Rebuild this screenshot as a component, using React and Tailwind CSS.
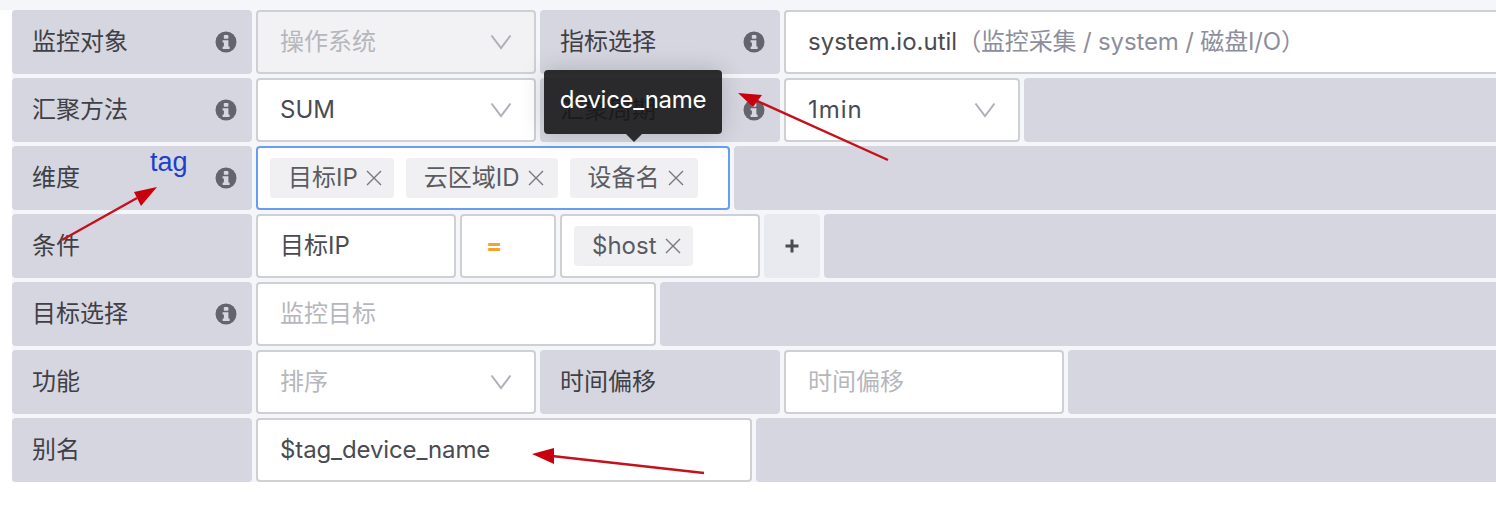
import React from 'react';

const InfoIcon = () => (
  <svg width="22" height="22" viewBox="0 0 22 22" className="shrink-0">
    <circle cx="11" cy="11" r="10.5" fill="#63656e" />
    <rect x="8.8" y="4" width="4.6" height="3.8" rx="0.8" fill="#d5d6e0" />
    <path d="M7.6 9.2 H13.4 V15.4 H14.6 V18 H7.6 V15.4 H8.9 V11.6 H7.6 Z" fill="#d5d6e0" />
  </svg>
);

const Label = ({ text, info, width = 'w-[240px]' }) => (
  <div className={`${width} h-16 shrink-0 flex items-center justify-between bg-[#d5d6e0] rounded pl-5 pr-[15px] text-[#3f4046]`}>
    <span>{text}</span>
    {info && <InfoIcon />}
  </div>
);

const Chevron = () => (
  <svg width="22" height="16" viewBox="0 0 22 16" fill="none" className="shrink-0">
    <polyline points="1.5,1.5 11,14 20.5,1.5" stroke="#aeb0b7" strokeWidth="2" />
  </svg>
);

const Box = ({ width, children, className = 'bg-white' }) => (
  <div className={`${width} h-16 shrink-0 flex items-center border-2 border-[#cfd0d4] rounded pl-[22px] text-[#4a4b52] ${className}`}>
    {children}
  </div>
);

const Select = ({ width, text, muted, disabled, textClass = '' }) => (
  <Box width={width} className={`justify-between pr-[22px] ${disabled ? 'bg-[#f2f2f4]' : 'bg-white'}`}>
    <span className={`${muted ? 'text-[#b6b7bd]' : ''} ${textClass}`}>{text}</span>
    <Chevron />
  </Box>
);

const Tag = ({ text, className = 'pr-3' }) => (
  <span className={`h-10 flex items-center bg-[#f0f0f2] rounded pl-[18px] text-[#5a5b63] ${className}`}>
    {text}
    <svg width="16" height="16" viewBox="0 0 16 16" className="ml-2">
      <path d="M1 1 L15 15 M15 1 L1 15" stroke="#77787f" strokeWidth="1.4" />
    </svg>
  </span>
);

const Filler = () => <div className="flex-1 h-16 bg-[#d5d6e0] rounded-l" />;

const Row = ({ children }) => <div className="flex gap-1">{children}</div>;

const App = () => {
  return (
    <div
      className="relative w-[1496px] h-[510px] overflow-hidden bg-white text-2xl"
      style={{ fontFamily: 'Inter, "Noto Sans CJK SC", sans-serif' }}
    >
      <div className="h-[10px] bg-[#f4f6fa]" />
      <div className="ml-3 flex flex-col gap-1 bg-[#f4f6fa]">
        <Row>
          <Label text="监控对象" info />
          <Select width="w-[280px]" text="操作系统" muted disabled />
          <Label text="指标选择" info />
          <Box width="flex-1 -mr-2">
            <span>system.io.util</span>
            <span className="text-[#8d8e9c] tracking-[-0.15px]">（监控采集 / system / 磁盘I/O）</span>
          </Box>
        </Row>
        <Row>
          <Label text="汇聚方法" info />
          <Select width="w-[280px]" text="SUM" />
          <Label text="汇聚周期" info />
          <Select width="w-[236px]" text="1min" textClass="tracking-[1px]" />
          <Filler />
        </Row>
        <Row>
          <Label text="维度" info />
          <div className="w-[474px] h-16 shrink-0 flex items-center gap-3 bg-white border-2 border-[#699df4] rounded pl-3 text-[#4a4b52]">
            <Tag text="目标IP" />
            <Tag text="云区域ID" className="pr-[14px]" />
            <Tag text="设备名" className="pr-[14px]" />
          </div>
          <Filler />
        </Row>
        <Row>
          <Label text="条件" />
          <Box width="w-[200px]">目标IP</Box>
          <Box width="w-[96px]">
            <span className="ml-[2px] text-[#f5a033] font-bold">=</span>
          </Box>
          <Box width="w-[200px]" className="bg-white !pl-3">
            <Tag text="$host" />
          </Box>
          <div className="w-14 h-16 shrink-0 flex items-center justify-center bg-[#e9eaf0] rounded">
            <svg width="16" height="16" viewBox="0 0 16 16">
              <path d="M8 1.5 V14.5 M1.5 8 H14.5" stroke="#4a4b52" strokeWidth="3" />
            </svg>
          </div>
          <Filler />
        </Row>
        <Row>
          <Label text="目标选择" info />
          <Box width="w-[400px]">
            <span className="text-[#b6b7bd]">监控目标</span>
          </Box>
          <Filler />
        </Row>
        <Row>
          <Label text="功能" />
          <Select width="w-[280px]" text="排序" muted />
          <Label text="时间偏移" />
          <Box width="w-[280px]">
            <span className="text-[#b6b7bd]">时间偏移</span>
          </Box>
          <Filler />
        </Row>
        <Row>
          <Label text="别名" />
          <Box width="w-[496px]">
            <span className="tracking-[-0.12px]">$tag_device_name</span>
          </Box>
          <Filler />
        </Row>
      </div>

      {/* tooltip, slightly see-through like the original */}
      <div className="absolute left-[544px] top-[70px] w-[178px] h-16 flex items-center justify-center pb-[4px] bg-[#171718]/90 rounded text-white tracking-[-0.3px] shadow-[0_0_24px_rgba(0,0,0,0.18)]">
        device_name
        <div className="absolute left-[82px] -bottom-2 w-0 h-0 border-x-8 border-x-transparent border-t-8 border-t-[#2a2b2e]" />
      </div>

      {/* annotations on top of the screenshot */}
      <span className="absolute left-[150px] top-[145px] text-[27px] text-[#1c3fd0]" style={{ fontFamily: '"Liberation Sans", sans-serif' }}>
        tag
      </span>
      <svg className="absolute left-0 top-0" width="1496" height="510" fill="#c8000e" stroke="#c4111c">
        <line x1="888" y1="160" x2="755" y2="100" strokeWidth="2.4" />
        <polygon points="738,93 762,95 753,107" stroke="none" />
        <line x1="62" y1="240" x2="137" y2="198" strokeWidth="2.4" />
        <polygon points="157,187 134,192 141,206" stroke="none" />
        <line x1="704" y1="473" x2="552" y2="456" strokeWidth="2.4" />
        <polygon points="532,454 554,448 554,464" stroke="none" />
      </svg>
    </div>
  );
};

export default App;
